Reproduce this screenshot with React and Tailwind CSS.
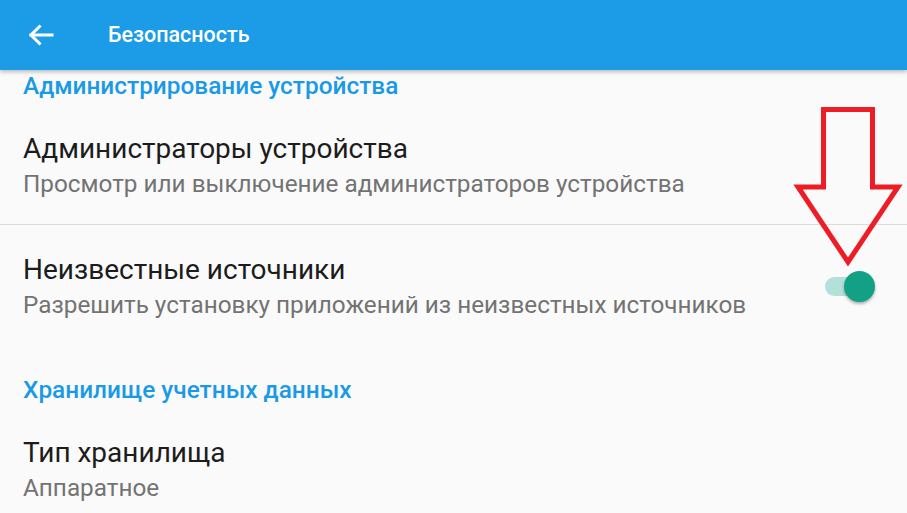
import { useState } from "react";

const SectionTitle = ({ children, className = "" }) => (
  <div className={`px-[23px] text-[24.4px] font-medium leading-[30px] text-[#1a9ae6] ${className}`}>{children}</div>
);

const Pref = ({ title, summary, className = "", children }) => (
  <div className={`flex items-center justify-between pl-[23px] pr-[32px] ${className}`}>
    <div className="flex flex-col">
      <div className="text-[28px] leading-[34px] text-[#1c1c1c]">{title}</div>
      <div className="mt-[3px] text-[24.3px] leading-[30px] text-[#737373]">{summary}</div>
    </div>
    {children}
  </div>
);

const Toggle = ({ on, onChange }) => (
  <button type="button" onClick={() => onChange(!on)} className="relative flex h-[31px] w-[50px] items-center">
    <span className="h-[19px] w-[46px] rounded-full bg-[#b3e0d8]" />
    <span className="absolute right-0 top-0 h-[31px] w-[31px] rounded-full bg-[#12a185] shadow-[0_2px_3px_rgba(0,0,0,0.3)]" />
  </button>
);

export default function App() {
  const [unknownSources, setUnknownSources] = useState(true);

  return (
    <div className="relative h-[513px] w-[907px] overflow-hidden bg-[#fafafa]" style={{ fontFamily: "Roboto, 'Noto Sans', sans-serif" }}>
      <header className="relative z-10 flex h-[70px] items-center bg-[#1c9be6] shadow-[0_2px_4px_rgba(0,0,0,0.25)]">
        <svg width="26" height="22" viewBox="0 0 26 22" className="ml-[28px]" fill="none" stroke="white" strokeWidth="3" strokeLinecap="square">
          <path d="M3 11H24" />
          <path d="M11.5 2.5L3 11L11.5 19.5" />
        </svg>
        <div className="ml-[54px] text-[21.5px] font-medium text-white">Безопасность</div>
      </header>

      <SectionTitle className="pt-[1px]">Администрирование устройства</SectionTitle>

      <Pref className="mt-[31px]" title="Администраторы устройства" summary="Просмотр или выключение администраторов устройства" />

      <div className="mt-[25px] h-px bg-[#dcdcdc]" />

      <Pref className="mt-[28px]" title="Неизвестные источники" summary="Разрешить установку приложений из неизвестных источников">
        <Toggle on={unknownSources} onChange={setUnknownSources} />
      </Pref>

      <SectionTitle className="mt-[55px]">Хранилище учетных данных</SectionTitle>

      <Pref className="mt-[31px]" title="Тип хранилища" summary="Аппаратное" />

      {/* red annotation arrow */}
      <svg className="pointer-events-none absolute left-0 top-0" width="907" height="513" fill="none">
        <polygon
          points="823.5,109.5 872.5,109.5 872.5,187 898,187 848,262 798,187 823.5,187"
          stroke="#ee1c25"
          strokeWidth="5"
          strokeLinejoin="miter"
        />
      </svg>
    </div>
  );
}
